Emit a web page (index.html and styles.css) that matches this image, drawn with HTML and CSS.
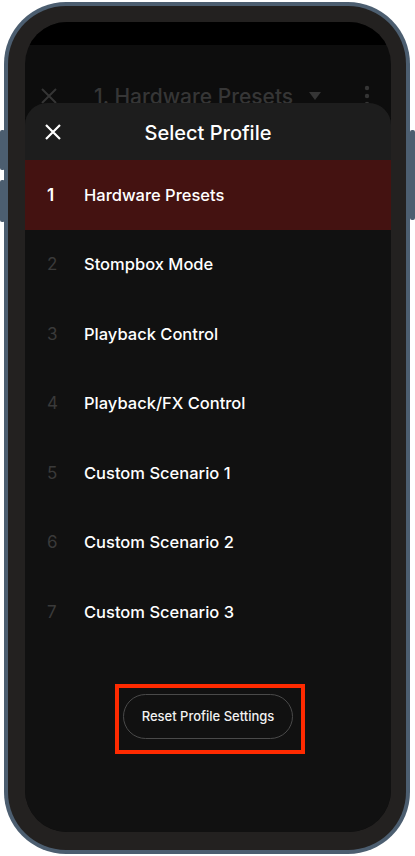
FILE: index.html
```html
<!DOCTYPE html>
<html lang="en">
<head>
    <meta charset="UTF-8">
    <meta name="viewport" content="width=device-width, initial-scale=1.0">
    <title>Select Profile</title>
    <link rel="stylesheet" href="styles.css">
</head>
<body>
    <div class="phone">
        <span class="side-btn left-1"></span>
        <span class="side-btn left-2"></span>
        <span class="side-btn right-1"></span>

        <div class="bezel">
            <div class="screen">
                <div class="statusbar"></div>

                <!-- app bar behind the sheet -->
                <div class="appbar">
                    <svg class="appbar-close" width="18" height="18" viewBox="0 0 18 18">
                        <path d="M2 2 L16 16 M16 2 L2 16" stroke="#353535" stroke-width="2" fill="none"/>
                    </svg>
                    <span class="appbar-title">1. Hardware Presets</span>
                    <svg class="appbar-caret" width="12" height="8" viewBox="0 0 12 8">
                        <path d="M0 0 H12 L6 8 Z" fill="#353535"/>
                    </svg>
                    <svg class="appbar-more" width="6" height="22" viewBox="0 0 6 22">
                        <circle cx="3" cy="3" r="2.2" fill="#353535"/>
                        <circle cx="3" cy="11" r="2.2" fill="#353535"/>
                        <circle cx="3" cy="19" r="2.2" fill="#353535"/>
                    </svg>
                </div>

                <div class="sheet">
                    <div class="sheet-header">
                        <svg class="sheet-close" width="18" height="18" viewBox="0 0 18 18">
                            <path d="M2 2 L16 16 M16 2 L2 16" stroke="#ffffff" stroke-width="2.2" fill="none"/>
                        </svg>
                        <h1 class="sheet-title">Select Profile</h1>
                    </div>

                    <ul class="profile-list">
                        <li class="profile active"><span class="num">1</span><span class="name">Hardware Presets</span></li>
                        <li class="profile"><span class="num">2</span><span class="name">Stompbox Mode</span></li>
                        <li class="profile"><span class="num">3</span><span class="name">Playback Control</span></li>
                        <li class="profile"><span class="num">4</span><span class="name">Playback/FX Control</span></li>
                        <li class="profile"><span class="num">5</span><span class="name">Custom Scenario 1</span></li>
                        <li class="profile"><span class="num">6</span><span class="name">Custom Scenario 2</span></li>
                        <li class="profile"><span class="num">7</span><span class="name">Custom Scenario 3</span></li>
                    </ul>

                    <div class="reset-wrap">
                        <div class="highlight">
                            <button class="reset-btn">Reset Profile Settings</button>
                        </div>
                    </div>
                </div>
            </div>
        </div>
    </div>
</body>
</html>
```

FILE: styles.css
```css
body {
    margin: 0;
    background-color: #ffffff;
    font-family: Inter, "Noto Sans", Arial, sans-serif;
}
.phone {
    position: relative;
    margin: 2px 0 0 4px;
    width: 406px;
    height: 852px;
    box-sizing: border-box;
    padding: 4px;
    background-color: #4c5e70;
    border-radius: 62px;
}
.side-btn {
    position: absolute;
    width: 5px;
    background-color: #4c5e70;
    border-radius: 2px;
}
.left-1 {
    left: -4px;
    top: 128px;
    height: 40px;
}
.left-2 {
    left: -4px;
    top: 178px;
    height: 42px;
}
.right-1 {
    right: -5px;
    top: 128px;
    height: 90px;
}
.bezel {
    height: 100%;
    box-sizing: border-box;
    padding: 16px 15px 18px 17px;
    background-color: #232120;
    border-radius: 58px;
}
.screen {
    position: relative;
    height: 100%;
    overflow: hidden;
    background-color: #0d0d0d;
    border-radius: 42px;
}
.statusbar {
    height: 23px;
    background-color: #000000;
}
.appbar {
    display: flex;
    align-items: center;
    height: 56px;
    padding: 23px 0 0 15px;
    box-sizing: content-box;
}
.appbar-title {
    margin-left: 36px;
    font-size: 21px;
    font-weight: 500;
    color: #363636;
}
.appbar-caret {
    margin-left: 16px;
}
.appbar-more {
    margin-left: auto;
    margin-right: 21px;
}
.sheet {
    position: absolute;
    top: 81px;
    left: 0;
    right: 0;
    bottom: 0;
    background-color: #111111;
    border-radius: 22px 22px 0 0;
    overflow: hidden;
}
.sheet-header {
    position: relative;
    display: flex;
    align-items: center;
    justify-content: center;
    height: 57px;
    background-color: #1d1d1d;
}
.sheet-close {
    position: absolute;
    left: 19px;
    top: 20px;
}
.sheet-title {
    margin: 2px 0 0 0;
    font-size: 20px;
    font-weight: 500;
    color: #ffffff;
}
.profile-list {
    list-style: none;
    margin: 0;
    padding: 0;
}
.profile {
    display: flex;
    align-items: center;
    height: 69.5px;
    padding-left: 22px;
}
.profile .num {
    width: 37px;
    font-size: 17px;
    color: #3a3a3a;
}
.profile .name {
    font-size: 16.5px;
    font-weight: 500;
    color: #ffffff;
}
.profile.active {
    background-color: #441211;
}
.profile.active .num {
    color: #ffffff;
    font-weight: 600;
}
.reset-wrap {
    display: flex;
    justify-content: center;
    padding: 37px 0 0 4px;
}
.highlight {
    border: 4px solid #ff2a00;
    padding: 6px 8px 11px 4px;
}
.reset-btn {
    width: 170px;
    height: 45px;
    background-color: #111111;
    border: 1px solid #4a4a4a;
    border-radius: 23px;
    color: #f2f2f2;
    font-family: Inter, "Noto Sans", Arial, sans-serif;
    font-size: 13px;
    font-weight: 500;
}
```
